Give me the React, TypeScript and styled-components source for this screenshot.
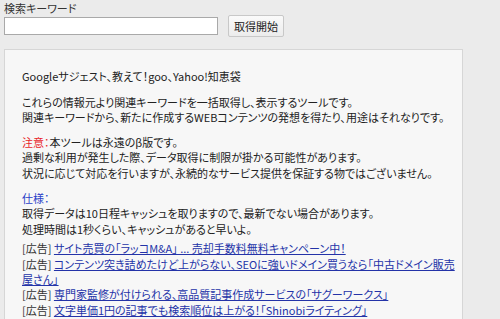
import React from "react";
import styled, { createGlobalStyle } from "styled-components";

const Global = createGlobalStyle`
  html, body { margin: 0; padding: 0; background: #ebebeb; }
  body {
    font-family: "Noto Sans CJK JP", "Noto Sans", sans-serif;
    font-size: 11px;
    color: #222;
    font-feature-settings: "palt";
  }
`;

const Page = styled.div`
  padding: 2px 4px 0 4px;
  width: 460px;
`;

const Label = styled.div`
  font-size: 11px;
  line-height: 13px;
  color: #333;
`;

const SearchRow = styled.div`
  display: flex;
  align-items: center;
  gap: 10px;
`;

const Input = styled.input`
  box-sizing: border-box;
  width: 214px;
  height: 18px;
  border: 1px solid #a9a9a9;
  background: #fff;
  padding: 0 3px;
  font: inherit;
`;

const Button = styled.button`
  box-sizing: border-box;
  height: 22px;
  padding: 0 5px;
  border: 1px solid #c8c8c8;
  border-radius: 2px;
  background: linear-gradient(#fafafa, #ececec);
  font-family: inherit;
  font-size: 11px;
  color: #222;
`;

const Panel = styled.div`
  margin-top: 12px;
  box-sizing: border-box;
  width: 459px;
  height: 280px;
  background: #f7f7f7;
  border: 1px solid #d6d6d6;
  padding: 19px 3px 19px 17px;
`;

const Para = styled.p<{ $after?: number }>`
  margin: 0 0 ${(p) => (p.$after ?? 9)}px 0;
  line-height: 15.6px;
  font-size: 11px;
`;

const Note = styled.span<{ $tone: "red" | "blue" }>`
  color: ${(p) => (p.$tone === "red" ? "#e8262b" : "#2a3fc8")};
`;

const Ads = styled.div`
  line-height: 15.3px;
  font-size: 11px;
`;

const Ad = styled.div`
  color: #333;
`;

const Link = styled.a`
  color: #2433a8;
  text-decoration: underline;
`;

const ads = [
  "サイト売買の「ラッコM&A」 ... 売却手数料無料キャンペーン中！",
  "コンテンツ突き詰めたけど上がらない、SEOに強いドメイン買うなら「中古ドメイン販売屋さん」",
  "専門家監修が付けられる、高品質記事作成サービスの「サグーワークス」",
  "文字単価1円の記事でも検索順位は上がる！「Shinobiライティング」",
];

export default function App() {
  return (
    <>
      <Global />
      <Page>
        <Label>検索キーワード</Label>
        <SearchRow>
          <Input type="text" />
          <Button>取得開始</Button>
        </SearchRow>
        <Panel>
          <Para $after={10}>Googleサジェスト、教えて！goo、Yahoo!知恵袋</Para>
          <Para>
            これらの情報元より関連キーワードを一括取得し、表示するツールです。
            <br />
            関連キーワードから、新たに作成するWEBコンテンツの発想を得たり、用途はそれなりです。
          </Para>
          <Para>
            <Note $tone="red">注意：</Note>本ツールは永遠のβ版です。
            <br />
            過剰な利用が発生した際、データ取得に制限が掛かる可能性があります。
            <br />
            状況に応じて対応を行いますが、永続的なサービス提供を保証する物ではございません。
          </Para>
          <Para $after={4}>
            <Note $tone="blue">仕様：</Note>
            <br />
            取得データは10日程キャッシュを取りますので、最新でない場合があります。
            <br />
            処理時間は1秒くらい、キャッシュがあると早いよ。
          </Para>
          <Ads>
            {ads.map((a) => (
              <Ad key={a}>
                [広告] <Link href="#">{a}</Link>
              </Ad>
            ))}
          </Ads>
        </Panel>
      </Page>
    </>
  );
}
